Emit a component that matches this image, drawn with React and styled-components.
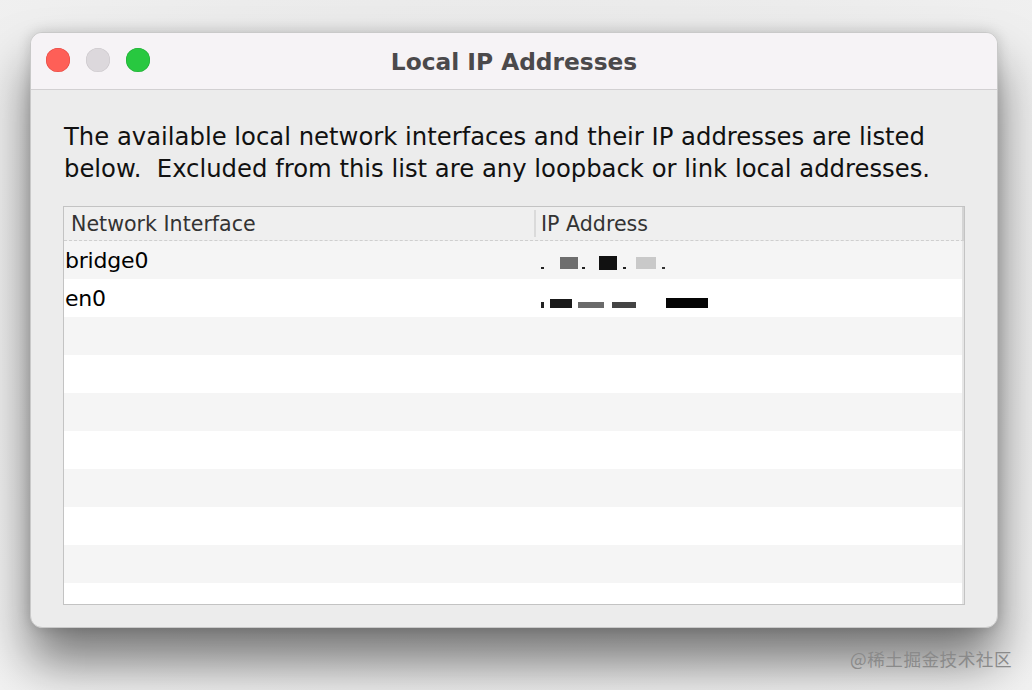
import React from 'react';
import styled, { createGlobalStyle } from 'styled-components';

const GlobalStyle = createGlobalStyle`
  html, body {
    margin: 0;
    padding: 0;
    background: #e6e6e6;
  }
  body {
    font-family: 'DejaVu Sans', 'Noto Sans', sans-serif;
  }
`;

const rows = [
  {
    name: 'bridge0',
    blots: [
      { w: 3, h: 2, top: 12, c: '#222', gap: 16 },
      { w: 18, h: 12, top: 2, c: '#6e6e6e', gap: 4 },
      { w: 3, h: 2, top: 12, c: '#222', gap: 14 },
      { w: 18, h: 14, top: 1, c: '#111', gap: 6 },
      { w: 3, h: 2, top: 12, c: '#222', gap: 10 },
      { w: 20, h: 12, top: 2, c: '#c9c9c9', gap: 6 },
      { w: 3, h: 2, top: 12, c: '#333', gap: 0 },
    ],
  },
  {
    name: 'en0',
    blots: [
      { w: 3, h: 6, top: 9, c: '#222', gap: 6 },
      { w: 22, h: 9, top: 6, c: '#1a1a1a', gap: 6 },
      { w: 26, h: 6, top: 9, c: '#6a6a6a', gap: 8 },
      { w: 24, h: 6, top: 9, c: '#444', gap: 30 },
      { w: 42, h: 10, top: 5, c: '#050505', gap: 0 },
    ],
  },
];

const TOTAL_ROWS = 10;

export default function App() {
  const list = Array.from({ length: TOTAL_ROWS }, (_, i) => rows[i] || null);
  return (
    <>
      <GlobalStyle />
      <Screen>
        <Window>
          <TitleBar>
            <Lights>
              <Light $color="#fe5f57" $edge="#e0443e" />
              <Light $color="#dcd8dc" $edge="#c8c4c8" />
              <Light $color="#28c840" $edge="#1ea733" />
            </Lights>
            <Title>Local IP Addresses</Title>
          </TitleBar>
          <Body>
            <Description>
              The available local network interfaces and their IP addresses are listed
              <br />
              below.&nbsp; Excluded from this list are any loopback or link local addresses.
            </Description>
            <Table>
              <HeaderRow>
                <HeaderCell $first>Network Interface</HeaderCell>
                <HeaderCell>IP Address</HeaderCell>
              </HeaderRow>
              <Rows>
                {list.map((row, i) => (
                  <Row key={i} $odd={i % 2 === 0}>
                    <NameCell>{row ? row.name : ''}</NameCell>
                    <AddrCell>
                      {row &&
                        row.blots.map((b, j) => (
                          <Blot
                            key={j}
                            $w={b.w}
                            $h={b.h}
                            $top={b.top}
                            $c={b.c}
                            $gap={b.gap}
                          />
                        ))}
                    </AddrCell>
                  </Row>
                ))}
              </Rows>
            </Table>
          </Body>
        </Window>
        <Watermark>@稀土掘金技术社区</Watermark>
      </Screen>
    </>
  );
}

const Screen = styled.div`
  position: relative;
  width: 1032px;
  height: 690px;
  overflow: hidden;
  background: radial-gradient(ellipse at 50% 40%, #e6e6e6 0%, #ececec 60%, #f2f2f2 100%);
  padding: 32px 0 0 30px;
  box-sizing: border-box;
`;

const Window = styled.div`
  width: 968px;
  height: 596px;
  border-radius: 12px;
  background: #ececec;
  border: 1px solid #c9c9c9;
  box-sizing: border-box;
  overflow: hidden;
  display: flex;
  flex-direction: column;
  box-shadow: 0 34px 50px rgba(0, 0, 0, 0.5), 0 0 14px rgba(0, 0, 0, 0.16);
`;

const TitleBar = styled.div`
  position: relative;
  height: 56px;
  flex: none;
  background: #f6f3f6;
  border-bottom: 1px solid #d2d0d2;
  display: flex;
  align-items: center;
  justify-content: center;
`;

const Lights = styled.div`
  position: absolute;
  left: 15px;
  top: 15px;
  display: flex;
  gap: 16px;
`;

const Light = styled.span`
  width: 24px;
  height: 24px;
  border-radius: 50%;
  background: ${(p) => p.$color};
  box-shadow: inset 0 0 0 0.5px ${(p) => p.$edge};
`;

const Title = styled.div`
  font-size: 23.3px;
  font-weight: bold;
  color: #4b494b;
  margin-top: 1px;
`;

const Body = styled.div`
  flex: 1;
  display: flex;
  flex-direction: column;
  padding: 31px 32px 22px 32px;
  min-height: 0;
`;

const Description = styled.div`
  font-size: 24.3px;
  line-height: 32px;
  color: #111;
  margin: 0 0 21px 1px;
  white-space: nowrap;
`;

const Table = styled.div`
  flex: 1;
  min-height: 0;
  border: 1px solid #c3c3c3;
  background: #ffffff;
  display: flex;
  flex-direction: column;
  overflow: hidden;
`;

const HeaderRow = styled.div`
  flex: none;
  height: 33px;
  display: grid;
  grid-template-columns: 470px 1fr;
  background: #efefef;
  border-bottom: 1px dashed #cfcfcf;
  border-right: 2px solid #d4d4d4;
`;

const HeaderCell = styled.div`
  display: flex;
  align-items: center;
  padding-left: ${(p) => (p.$first ? '7px' : '5px')};
  font-size: 20.6px;
  color: #333;
  border-left: ${(p) => (p.$first ? 'none' : '2px solid #dadada')};
  margin: 3px 0;
`;

const Rows = styled.div`
  flex: 1;
  min-height: 0;
  overflow: hidden;
  border-right: 2px solid #e6e6e6;
`;

const Row = styled.div`
  height: 38px;
  display: grid;
  grid-template-columns: 474px 1fr;
  background: ${(p) => (p.$odd ? '#f5f5f5' : '#ffffff')};
`;

const NameCell = styled.div`
  display: flex;
  align-items: center;
  padding-left: 1px;
  font-size: 22px;
  color: #000;
  letter-spacing: -0.2px;
`;

const AddrCell = styled.div`
  display: flex;
  align-items: flex-start;
  padding: 14px 0 0 3px;
`;

const Blot = styled.span`
  flex: none;
  width: ${(p) => p.$w}px;
  height: ${(p) => p.$h}px;
  margin-top: ${(p) => p.$top}px;
  margin-right: ${(p) => p.$gap}px;
  background: ${(p) => p.$c};
`;

const Watermark = styled.div`
  position: absolute;
  right: 20px;
  bottom: 19px;
  font-family: 'Noto Sans CJK SC', sans-serif;
  font-size: 17.6px;
  color: #8a8a8a;
  letter-spacing: 0.5px;
`;
